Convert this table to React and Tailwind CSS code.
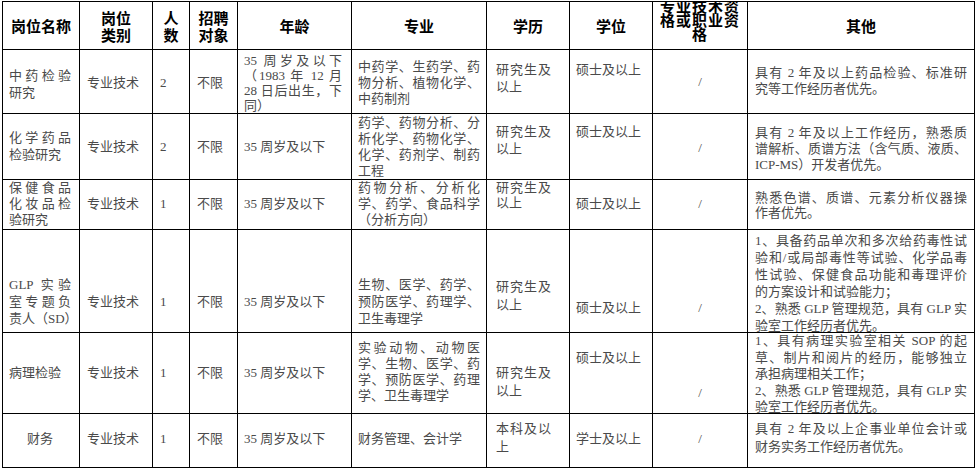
import React from 'react';

const colPad = [
    'pl-[6px] pr-[8px]',
    'pl-[7px] pr-[2px]',
    'pl-[7px] pr-[2px]',
    'pl-[7px] pr-[2px]',
    'pl-[6px] pr-[9px]',
    'pl-[6px] pr-[6px]',
    'pl-[9px] pr-[18px]',
    'pl-[6px] pr-[2px]',
    'px-[2px] text-center',
    'pl-[7px] pr-[7px]',
];

const headers = [
    ['岗位名称'],
    ['岗位', '类别'],
    ['人', '数'],
    ['招聘', '对象'],
    ['年龄'],
    ['专业'],
    ['学历'],
    ['学位'],
    null,
    ['其他'],
];

// each cell: [lines, padding-top class, line-height class, centered]
const rows = [
    [
        [['中药检验', '研究'], 'pt-[17px]', 'leading-[17px]'],
        [['专业技术'], 'pt-[24px]', 'leading-[17px]'],
        [['2'], 'pt-[24px]', 'leading-[17px]'],
        [['不限'], 'pt-[24px]', 'leading-[17px]'],
        [['35 周岁及以下', '（1983 年 12 月', '28 日后出生，下', '同）'], 'pt-[3px]', 'leading-[15px]'],
        [['中药学、生药学、药', '物分析、植物化学、', '中药制剂'], 'pt-[9px]', 'leading-[16px]'],
        [['研究生及', '以上'], 'pt-[11px]', 'leading-[17px]'],
        [['硕士及以上'], 'pt-[11px]', 'leading-[17px]'],
        [['/'], 'pt-[23px]', 'leading-[17px]'],
        [['具有 2 年及以上药品检验、标准研', '究等工作经历者优先。'], 'pt-[15px]', 'leading-[16px]'],
    ],
    [
        [['化学药品', '检验研究'], 'pt-[15px]', 'leading-[17px]'],
        [['专业技术'], 'pt-[24px]', 'leading-[17px]'],
        [['2'], 'pt-[24px]', 'leading-[17px]'],
        [['不限'], 'pt-[24px]', 'leading-[17px]'],
        [['35 周岁及以下'], 'pt-[24px]', 'leading-[17px]'],
        [['药学、药物分析、分', '析化学、药物化学、', '化学、药剂学、制药', '工程'], 'pt-[1px]', 'leading-[16px]'],
        [['研究生及', '以上'], 'pt-[9px]', 'leading-[17px]'],
        [['硕士及以上'], 'pt-[9px]', 'leading-[17px]'],
        [['/'], 'pt-[25px]', 'leading-[17px]'],
        [['具有 2 年及以上工作经历，熟悉质', '谱解析、质谱方法（含气质、液质、', 'ICP-MS）开发者优先。'], 'pt-[11px]', 'leading-[16px]'],
    ],
    [
        [['保健食品', '化妆品检', '验研究'], 'pt-[0px]', 'leading-[16px]'],
        [['专业技术'], 'pt-[15px]', 'leading-[17px]'],
        [['1'], 'pt-[15px]', 'leading-[17px]'],
        [['不限'], 'pt-[15px]', 'leading-[17px]'],
        [['35 周岁及以下'], 'pt-[15px]', 'leading-[17px]'],
        [['药物分析、分析化', '学、药学、食品科学', '（分析方向）'], 'pt-[0px]', 'leading-[16px]'],
        [['研究生及', '以上'], 'pt-[0px]', 'leading-[15px]'],
        [['硕士及以上'], 'pt-[15px]', 'leading-[17px]'],
        [['/'], 'pt-[15px]', 'leading-[17px]'],
        [['熟悉色谱、质谱、元素分析仪器操', '作者优先。'], 'pt-[10px]', 'leading-[15px]'],
    ],
    [
        [['GLP 实验', '室专题负', '责人（SD）'], 'pt-[46px]', 'leading-[17px]'],
        [['专业技术'], 'pt-[63px]', 'leading-[17px]'],
        [['1'], 'pt-[63px]', 'leading-[17px]'],
        [['不限'], 'pt-[63px]', 'leading-[17px]'],
        [['35 周岁及以下'], 'pt-[63px]', 'leading-[17px]'],
        [['生物、医学、药学、', '预防医学、药理学、', '卫生毒理学'], 'pt-[46px]', 'leading-[17px]'],
        [['研究生及', '以上'], 'pt-[48px]', 'leading-[18px]'],
        [['硕士及以上'], 'pt-[69px]', 'leading-[17px]'],
        [['/'], 'pt-[69px]', 'leading-[17px]'],
        [
            [
                '1、具备药品单次和多次给药毒性试',
                '验和/或局部毒性等试验、化学品毒',
                '性试验、保健食品功能和毒理评价',
                '的方案设计和试验能力；',
                '2、熟悉 GLP 管理规范，具有 GLP 实',
                '验室工作经历者优先。',
            ],
            'pt-[2px]',
            'leading-[17px]',
        ],
    ],
    [
        [['病理检验'], 'pt-[31px]', 'leading-[17px]'],
        [['专业技术'], 'pt-[31px]', 'leading-[17px]'],
        [['1'], 'pt-[31px]', 'leading-[17px]'],
        [['不限'], 'pt-[31px]', 'leading-[17px]'],
        [['35 周岁及以下'], 'pt-[31px]', 'leading-[17px]'],
        [['实验动物、动物医', '学、生物、医学、药', '学、预防医学、药理', '学、卫生毒理学'], 'pt-[7px]', 'leading-[16px]'],
        [['研究生及', '以上'], 'pt-[31px]', 'leading-[18px]'],
        [['硕士及以上'], 'pt-[16px]', 'leading-[17px]'],
        [['/'], 'pt-[51px]', 'leading-[17px]'],
        [
            [
                '1、具有病理实验室相关 SOP 的起',
                '草、制片和阅片的经历，能够独立',
                '承担病理相关工作；',
                '2、熟悉 GLP 管理规范，具有 GLP 实',
                '验室工作经历者优先。',
            ],
            'pt-[0px]',
            'leading-[16.6px]',
        ],
    ],
    [
        [['财务'], 'pt-[16px]', 'leading-[17px]', true],
        [['专业技术'], 'pt-[16px]', 'leading-[17px]'],
        [['1'], 'pt-[16px]', 'leading-[17px]'],
        [['不限'], 'pt-[16px]', 'leading-[17px]'],
        [['35 周岁及以下'], 'pt-[16px]', 'leading-[17px]'],
        [['财务管理、会计学'], 'pt-[16px]', 'leading-[17px]'],
        [['本科及以', '上'], 'pt-[6px]', 'leading-[18px]'],
        [['学士及以上'], 'pt-[16px]', 'leading-[17px]'],
        [['/'], 'pt-[16px]', 'leading-[17px]'],
        [['具有 2 年及以上企事业单位会计或', '财务实务工作经历者优先。'], 'pt-[6px]', 'leading-[18px]'],
    ],
];

function BodyCell({ cell, col }) {
    const [lines, pt, lh, centered] = cell;
    return (
        <div className={`bg-white overflow-hidden ${colPad[col]} ${pt} ${lh} ${centered ? 'text-center' : ''}`}>
            {lines.map((line, i) => {
                const justify = i < lines.length - 1 && !line.endsWith('；');
                return (
                    <div
                        key={i}
                        className={`whitespace-nowrap ${justify ? 'text-justify [text-align-last:justify]' : ''}`}
                    >
                        {line}
                    </div>
                );
            })}
        </div>
    );
}

export default function App() {
    return (
        <div className="w-[976px] h-[469px] bg-white overflow-hidden pt-[1px] pl-[2px]">
            <div className="w-[973px] grid grid-cols-[76px_72px_36px_47px_113px_134px_82px_82px_94px_226px] grid-rows-[47px_63px_65px_49px_102px_80px_53px] gap-px p-px bg-black text-[13px] text-[#4a4a4a] font-['Liberation_Serif','Noto_Sans_CJK_SC',serif]">
                {headers.map((h, i) =>
                    h ? (
                        <div
                            key={i}
                            className="bg-white flex flex-col items-center justify-center text-center text-black font-bold text-[15px] leading-[17px] font-['Noto_Sans_CJK_SC',sans-serif]"
                        >
                            {h.map((t) => (
                                <div key={t}>{t}</div>
                            ))}
                        </div>
                    ) : (
                        <div
                            key={i}
                            className="bg-white overflow-hidden text-center text-black font-bold text-[15px] leading-[14px] tracking-[1px] font-['Noto_Sans_CJK_SC',sans-serif]"
                        >
                            <div className="mt-[-3px]">专业技术资</div>
                            <div>格或职业资</div>
                            <div>格</div>
                        </div>
                    )
                )}
                {rows.map((row, r) =>
                    row.map((cell, c) => <BodyCell key={`${r}-${c}`} cell={cell} col={c} />)
                )}
            </div>
        </div>
    );
}
